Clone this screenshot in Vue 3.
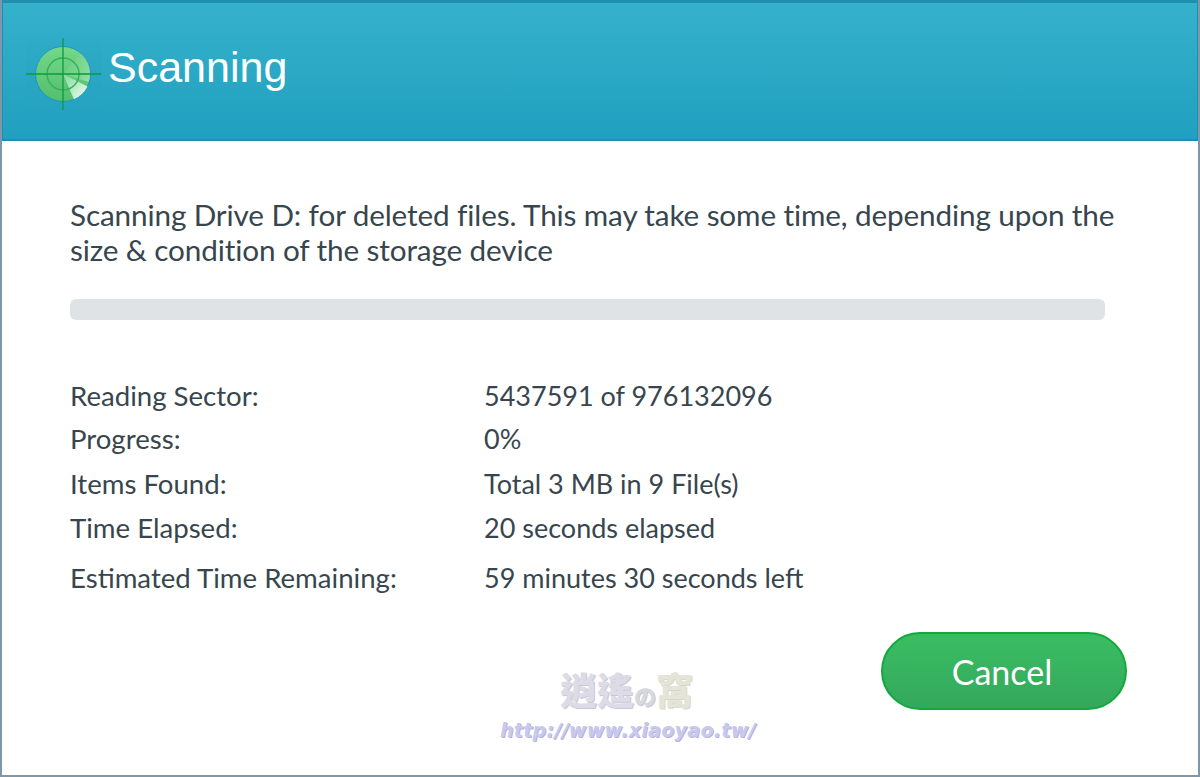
<script setup>
const rows = [
  { label: 'Reading Sector:', value: '5437591 of 976132096' },
  { label: 'Progress:', value: '0%' },
  { label: 'Items Found:', value: 'Total 3 MB in 9 File(s)' },
  { label: 'Time Elapsed:', value: '20 seconds elapsed' },
  { label: 'Estimated Time Remaining:', value: '59 minutes 30 seconds left' },
]
</script>

<template>
  <div class="window">
    <header class="head">
      <svg class="icon" width="76" height="76" viewBox="0 0 76 76" aria-hidden="true">
        <defs>
          <linearGradient id="ball" x1="0" y1="0" x2="0" y2="1">
            <stop offset="0" stop-color="#74d88a" />
            <stop offset="1" stop-color="#52bf6c" />
          </linearGradient>
          <linearGradient id="shine" gradientUnits="userSpaceOnUse" x1="40" y1="40" x2="58" y2="57">
            <stop offset="0" stop-color="#8fdca4" />
            <stop offset="1" stop-color="#dff7e3" />
          </linearGradient>
          <linearGradient id="soft" gradientUnits="userSpaceOnUse" x1="37" y1="20" x2="64" y2="42">
            <stop offset="0" stop-color="#7fdb95" stop-opacity="0" />
            <stop offset="1" stop-color="#a8e8b8" stop-opacity="0.7" />
          </linearGradient>
        </defs>
        <rect x="0" y="0" width="76" height="76" fill="#2a9fb8" opacity="0.05" />
        <circle cx="37" cy="37" r="27.5" fill="url(#ball)" stroke="#1f92c4" stroke-width="1" />
        <path d="M37 37 L55 16.2 A27.5 27.5 0 0 1 62.8 45 Z" fill="url(#soft)" />
        <path d="M37 37 L48 62.2 A27.5 27.5 0 0 0 61.5 49.5 Z" fill="url(#shine)" />
        <circle cx="37" cy="37" r="16" fill="none" stroke="#35ad5c" stroke-width="1.4" />
        <path d="M37 1V73M0 37H75" stroke="#0d9a3c" stroke-width="1.3" />
      </svg>
      <h1 class="title">Scanning</h1>
    </header>
    <main class="body">
      <p class="intro">Scanning Drive D: for deleted files. This may take some time, depending upon the size &amp; condition of the storage device</p>
      <div class="track"></div>
      <dl class="stats">
        <div v-for="row in rows" :key="row.label" class="row">
          <dt>{{ row.label }}</dt>
          <dd>{{ row.value }}</dd>
        </div>
      </dl>
      <div class="foot">
        <div class="mark">
          <div class="mark-cn">逍遙<span class="mark-no">の</span><span class="mark-last">窩</span></div>
          <div class="mark-url">http://www.xiaoyao.tw/</div>
        </div>
        <button class="cancel" type="button">Cancel</button>
      </div>
    </main>
  </div>
</template>

<style>
html, body { margin: 0; background: #fff; }
</style>

<style scoped>
.window {
  box-sizing: border-box;
  width: 1200px;
  height: 777px;
  background: #fff;
  border-left: 2px solid #7f97a8;
  border-right: 2px solid #7f97a8;
  border-bottom: 2px solid #7f97a8;
  font-family: Lato, "Liberation Sans", sans-serif;
  color: #37464e;
  overflow: hidden;
}
.head {
  box-sizing: border-box;
  height: 141px;
  margin: 0 -2px;
  padding: 0 0 9px 23px;
  display: flex;
  align-items: center;
  gap: 6px;
  border-top: 3px solid #1f90b0;
  border-bottom: 2px solid #1f90b0;
  border-left: 3px solid #1f90b0;
  border-right: 3px solid #1f90b0;
  background: linear-gradient(#35b1cb, #20a0bf);
}
.icon { flex: none; margin-top: 16px; }
.title {
  margin: 0;
  font-family: "Liberation Sans", Arial, sans-serif;
  font-weight: 400;
  font-size: 43px;
  line-height: 50px;
  color: #fff;
}
.body {
  padding: 56px 68px 0;
}
.intro {
  margin: 0;
  width: 1060px;
  font-size: 29.7px;
  line-height: 35px;
  letter-spacing: -0.12px;
}
.track {
  width: 1035px;
  height: 21px;
  margin-top: 32px;
  border-radius: 6px;
  background: #dfe3e6;
}
.stats {
  margin: 59px 0 0;
  font-size: 27.6px;
}
.row {
  display: flex;
  height: 44px;
  line-height: 34px;
}
.row:first-child { height: 43px; }
.row:nth-child(2) { height: 45px; }
.row:last-child { margin-top: 6px; }
.row dt { width: 414px; flex: none; }
.row dd { margin: 0; font-size: 27px; }
.foot {
  position: relative;
  display: flex;
  justify-content: flex-end;
  margin-top: 27px;
  padding-right: 3px;
}
.cancel {
  box-sizing: border-box;
  width: 246px;
  height: 78px;
  border: 2px solid #12a83c;
  border-radius: 39px;
  background: linear-gradient(#3abd62, #34a85c);
  color: #fff;
  font-family: Lato, sans-serif;
  font-size: 34px;
  padding: 0 4px 0 0;
  cursor: pointer;
}
.mark {
  position: absolute;
  left: 430px;
  top: 32px;
  width: 270px;
  pointer-events: none;
}
.mark-cn {
  padding-left: 60px;
  font-family: "Noto Sans CJK TC", sans-serif;
  font-weight: 900;
  font-size: 37px;
  line-height: 50px;
  color: #dcdbe6;
  text-shadow: 1px 1px 0 #c9c8d6;
  white-space: nowrap;
}
.mark-no {
  font-size: 22px;
  color: #d8d8dc;
}
.mark-last { color: #e4e4d8; text-shadow: 1px 1px 0 #d8d8c8; }
.mark-url {
  font-family: "DejaVu Sans", sans-serif;
  font-weight: 700;
  font-style: italic;
  font-size: 19px;
  line-height: 20px;
  letter-spacing: 0.3px;
  color: #c9c9ee;
  text-shadow: 1px 1px 0 #b4b4dc;
  white-space: nowrap;
}
</style>
